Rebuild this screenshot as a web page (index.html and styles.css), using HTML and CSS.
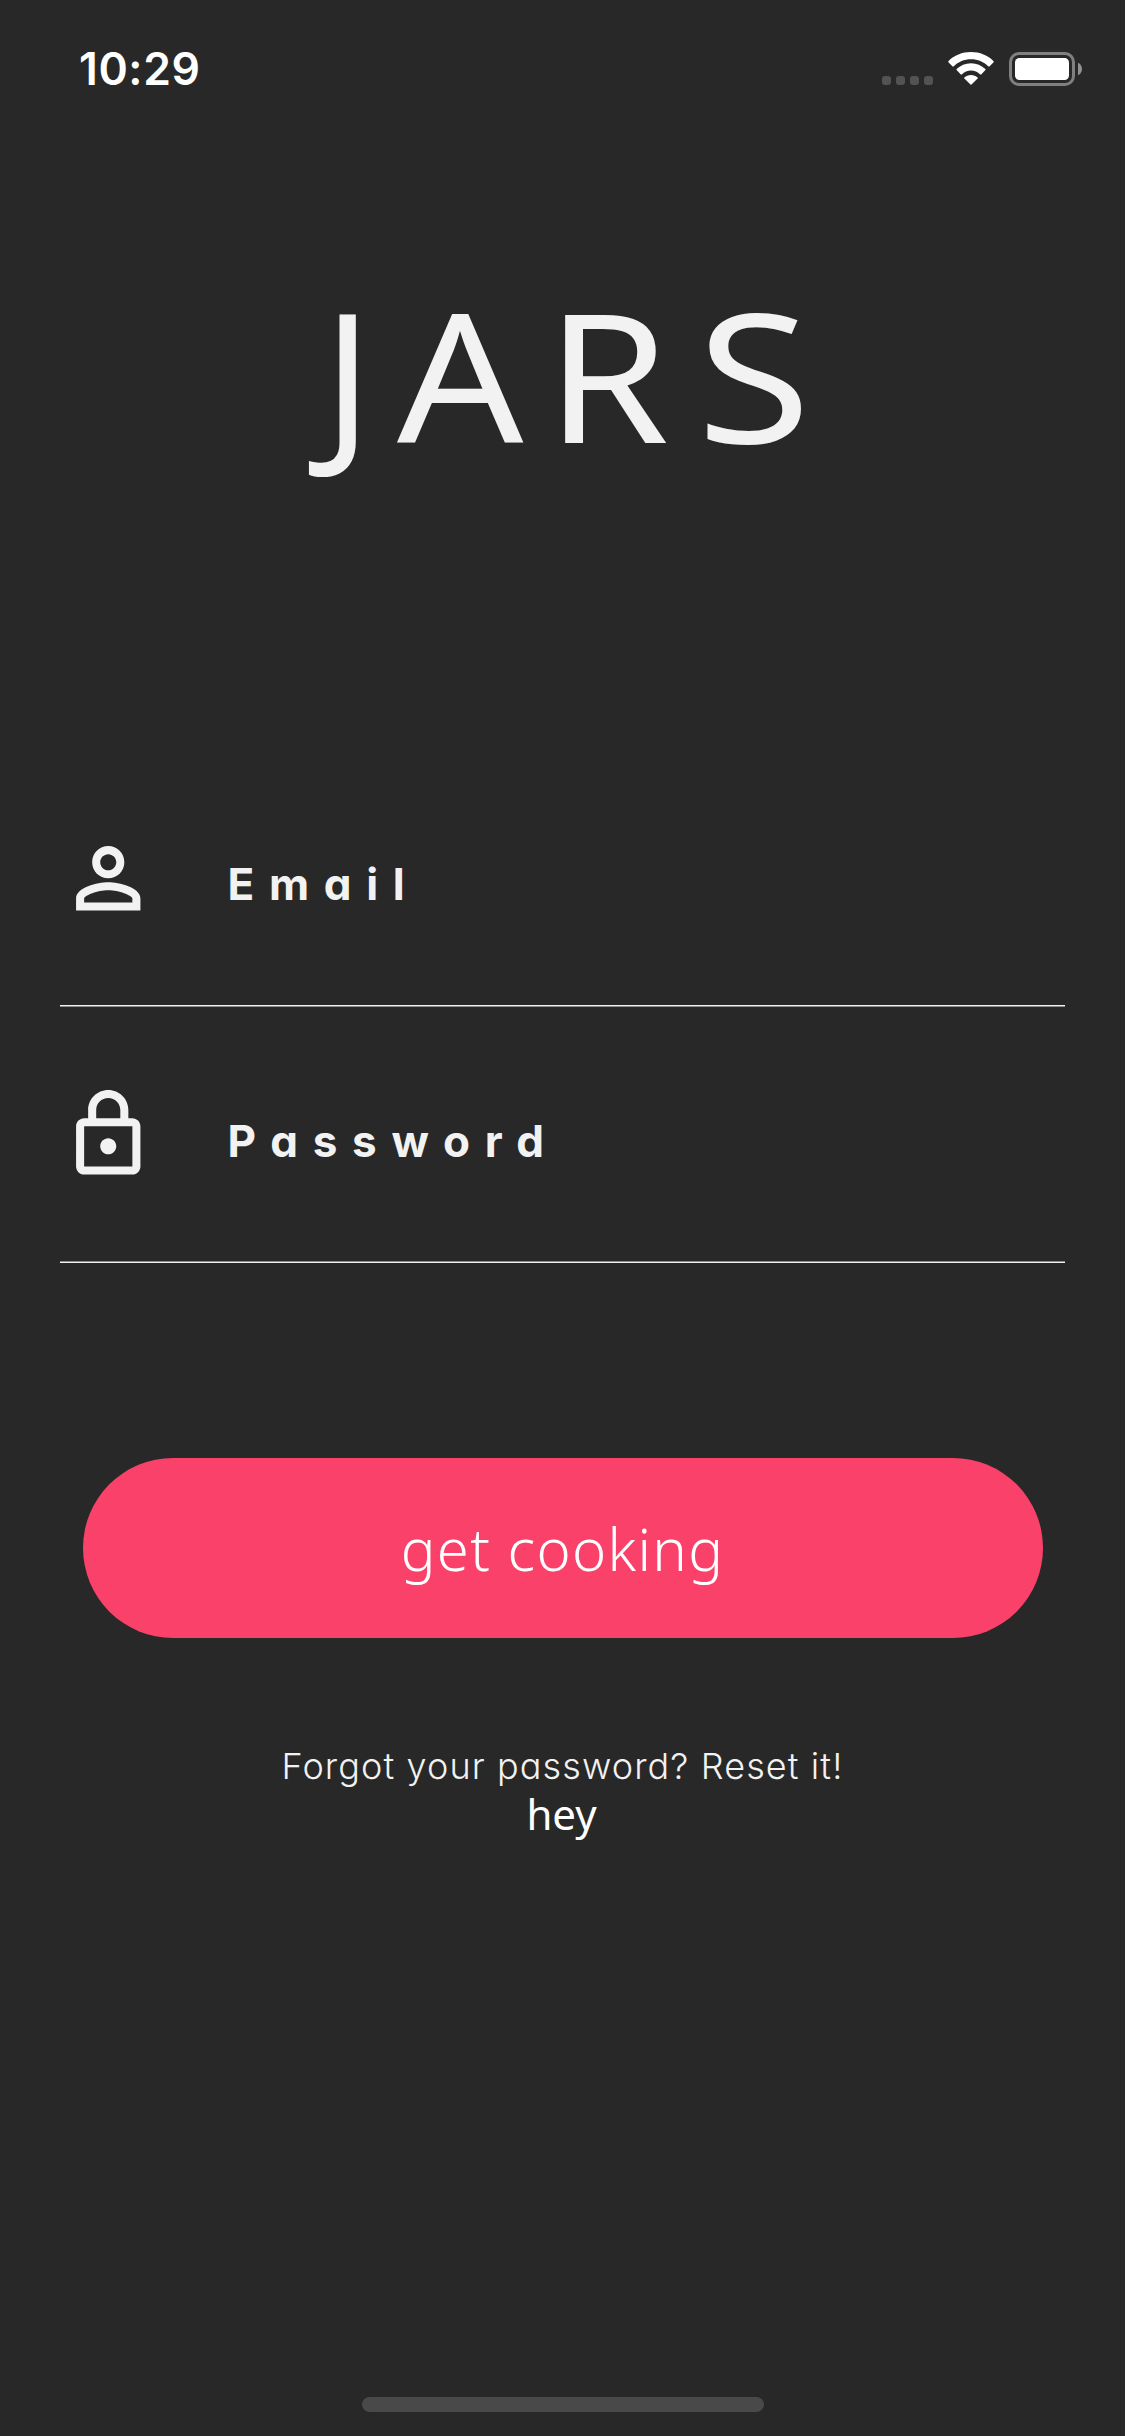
FILE: index.html
```html
<!DOCTYPE html>
<html lang="en">
<head>
<meta charset="utf-8">
<title>Jars</title>
<link rel="stylesheet" href="styles.css">
</head>
<body>
<div class="screen">
  <header class="status-bar">
    <span class="time">10:29</span>
    <div class="indicators">
      <div class="signal"><i></i><i></i><i></i><i></i></div>
      <svg class="wifi" viewBox="0 0 46 34" fill="#fff">
        <path d="M23 0C14.200 0 6 3.300 .4 9.200Q0 9.700 .4 10.200L4.600 14.400Q5.100 14.800 5.600 14.400C10.300 9.900 16.300 7.300 23 7.300S35.700 9.900 40.400 14.400Q40.900 14.800 41.400 14.400L45.600 10.200Q46 9.700 45.600 9.200C40 3.300 31.800 0 23 0Z"/>
        <path d="M23 11.200C17.400 11.200 12.400 13.400 8.600 17.100Q8.200 17.600 8.600 18.100L12.800 22.400Q13.300 22.800 13.800 22.400C16.300 20 19.500 18.600 23 18.600S29.700 20 32.200 22.400Q32.700 22.800 33.200 22.400L37.400 18.100Q37.800 17.600 37.400 17.100C33.600 13.400 28.600 11.200 23 11.200Z"/>
        <path d="M23 22.900C20.400 22.900 18.100 23.900 16.400 25.500Q16 26 16.400 26.500L22.500 32.600Q23 33 23.500 32.600L29.600 26.500Q30 26 29.600 25.500C27.900 23.900 25.600 22.900 23 22.900Z"/>
      </svg>
      <svg class="battery" viewBox="0 0 74 34">
        <rect x="1.500" y="1.500" width="63" height="31" rx="8.500" fill="none" stroke="#808080" stroke-width="3"/>
        <rect x="6" y="6" width="54" height="22" rx="4.500" fill="#fff"/>
        <path d="M69 10.800C71.500 11.900 73 14.200 73 17S71.500 22.100 69 23.200Z" fill="#929292"/>
      </svg>
    </div>
  </header>

  <h1 class="logo"><span class="letter-j">J</span><span class="letter-a">A</span><span class="letter-r">R</span><span class="letter-s">S</span></h1>

  <form class="login">
    <label class="field email">
      <svg class="field-icon" viewBox="0 0 24 24"><path d="M12 6c1.100 0 2 .9 2 2s-.9 2-2 2-2-.9-2-2 .9-2 2-2m0 9c2.700 0 5.800 1.290 6 2v1H6v-.99c.2-.72 3.300-2.010 6-2.010m0-11C9.790 4 8 5.790 8 8s1.790 4 4 4 4-1.790 4-4-1.790-4-4-4zm0 9c-2.670 0-8 1.340-8 4v3h16v-3c0-2.660-5.330-4-8-4z"/></svg>
      <span class="field-label">Email</span>
    </label>
    <label class="field password">
      <svg class="field-icon" viewBox="0 0 24 24"><path d="M12 17c1.100 0 2-.9 2-2s-.9-2-2-2-2 .9-2 2 .9 2 2 2zm6-9h-1V6c0-2.760-2.240-5-5-5S7 3.240 7 6v2H6c-1.100 0-2 .9-2 2v10c0 1.100.9 2 2 2h12c1.100 0 2-.9 2-2V10c0-1.100-.9-2-2-2zM9 6c0-1.660 1.340-3 3-3s3 1.340 3 3v2H9V6zM18 20H6V10h12v10z"/></svg>
      <span class="field-label">Password</span>
    </label>
    <button class="submit" type="button">get cooking</button>
  </form>

  <p class="reset">Forgot your password? Reset it!</p>
  <p class="note">hey</p>
  <div class="home-indicator"></div>
</div>
</body>
</html>
```
FILE: styles.css
```css
* { box-sizing: border-box; margin: 0; padding: 0; }

body {
  background: #282828;
  color: #f2f2f2;
  font-family: "Noto Sans", sans-serif;
}

.screen {
  display: flex;
  flex-direction: column;
  width: 1125px;
  height: 2436px;
  overflow: hidden;
}

.status-bar {
  display: flex;
  justify-content: space-between;
  height: 132px;
  padding: 0 42px 0 79px;
}

.time {
  margin-top: 39px;
  font: 600 44.500px/60px Inter, sans-serif;
  letter-spacing: .6px;
  color: #fff;
}

.indicators { display: flex; padding-top: 52px; }

.signal { display: flex; gap: 5px; padding-top: 24px; margin-right: 15px; }
.signal i { width: 9px; height: 9px; border-radius: 3px; background: #535353; }
.wifi { width: 46px; height: 34px; margin-right: 15px; }
.battery { width: 74px; height: 34px; }

.logo {
  display: flex;
  height: 200px;
  margin-top: 142px;
  padding-left: 323px;
  font: 368 180px/200px "Noto Sans", sans-serif;
}
.logo span { flex: none; transform-origin: 0 50%; }
.letter-j { width: 74px; }
.letter-a { width: 149px; transform: scaleX(1.1); }
.letter-r { width: 151px; transform: scaleX(1.1); }
.letter-s { transform: scaleX(1.15); }

.login {
  display: flex;
  flex-direction: column;
  padding: 0 60px;
  margin-top: 332px;
}

.field { display: flex; border-bottom: 1px solid #f2f2f2; }
.email { height: 200px; margin-bottom: 1px; padding-top: 24px; box-shadow: 0 1px #8d8d8d; }
.password { height: 256px; padding-top: 79px; box-shadow: inset 0 -1px #8d8d8d; }

.field-icon { width: 96.500px; height: 96.500px; margin-right: 71px; fill: #f2f2f2; }

.field-label {
  font: 650 44px/60px Inter, sans-serif;
  font-feature-settings: "cv11" 1;
  letter-spacing: 14.700px;
}
.email .field-label { margin-top: 24px; }
.password .field-label { margin-top: 25px; }

.submit {
  width: 960px;
  height: 180px;
  margin: 195px 0 0 22.500px;
  border: 0;
  border-radius: 90px;
  background: #f9416a;
  color: #fff;
  font: 350 58px/182px "Noto Sans", sans-serif;
  letter-spacing: 1.300px;
}

.reset {
  margin-top: 104px;
  text-align: center;
  font: 320 36px/48px Inter, sans-serif;
  font-feature-settings: "cv11" 1;
  letter-spacing: 1.100px;
}

.note {
  padding-right: 2px;
  text-align: center;
  font: 400 42px/48px "Noto Sans", sans-serif;
  color: #fff;
}

.home-indicator {
  width: 402px;
  height: 15px;
  margin: auto auto 24px 362px;
  border-radius: 8px;
  background: #494949;
}
```
